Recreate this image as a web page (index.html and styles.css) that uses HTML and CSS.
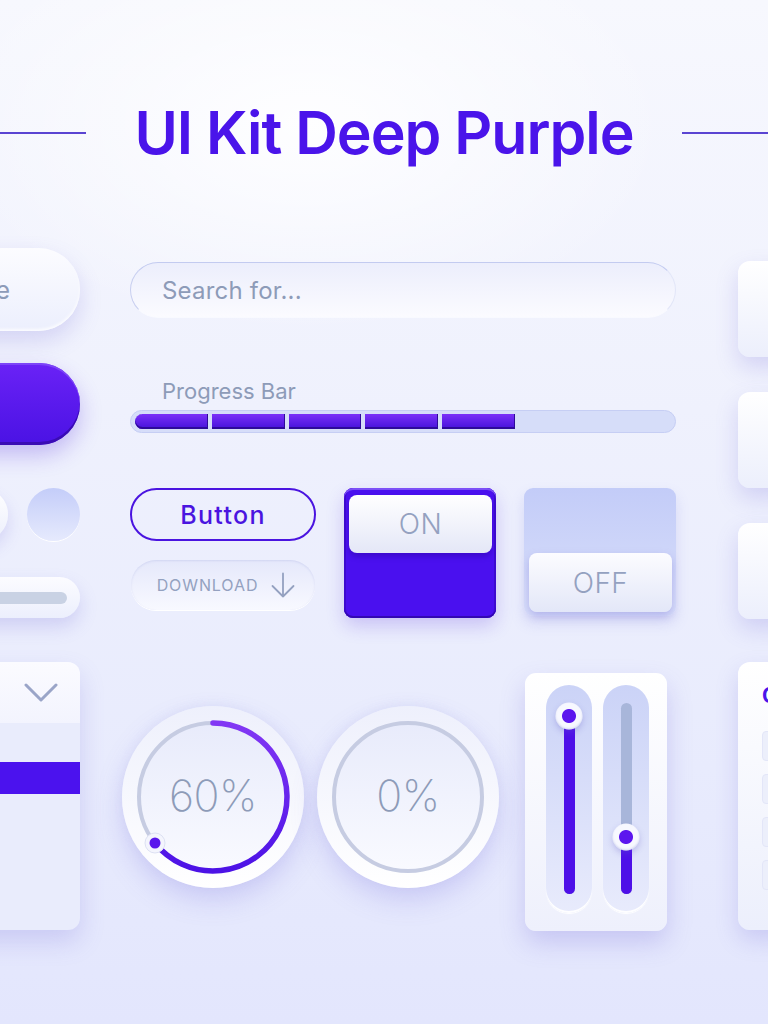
FILE: index.html
```html
<!DOCTYPE html>
<html lang="en">
<head>
<meta charset="utf-8">
<title>UI Kit Deep Purple</title>
<link rel="stylesheet" href="styles.css">
</head>
<body>
<main class="page">
  <header class="title-row">
    <span class="title-line"></span>
    <h1 class="title">UI Kit Deep Purple</h1>
    <span class="title-line"></span>
  </header>

  <section class="board">
    <div class="col col-left">
      <div class="pill-light"><span>Inactive</span></div>
      <div class="pill-purple"></div>
      <div class="dot-row">
        <span class="dot dot-white"></span>
        <span class="dot dot-blue"></span>
      </div>
      <div class="range-pill"><span class="range-track"></span></div>
      <div class="dropdown">
        <div class="dropdown-head">
          <svg class="chevron" width="34" height="20" viewBox="0 0 34 20"><polyline points="2,2 17,17 32,2" fill="none" stroke="#9aa5c8" stroke-width="3" stroke-linecap="round" stroke-linejoin="round"/></svg>
        </div>
        <div class="dropdown-body">
          <div class="dropdown-item selected"></div>
        </div>
      </div>
    </div>

    <div class="col col-mid">
      <div class="search"><span>Search for...</span></div>
      <div class="progress-label">Progress Bar</div>
      <div class="progress">
        <span class="seg seg-first"></span>
        <span class="seg"></span>
        <span class="seg"></span>
        <span class="seg"></span>
        <span class="seg"></span>
      </div>

      <div class="controls">
        <div class="btn-col">
          <button class="btn-outline">Button</button>
          <button class="btn-download">
            <span>DOWNLOAD</span>
            <svg width="24" height="26" viewBox="0 0 24 26"><path d="M12 1.5V24.5M1.5 14L12 24.5L22.5 14" fill="none" stroke="#94a1c0" stroke-width="1.8" stroke-linecap="round" stroke-linejoin="round"/></svg>
          </button>
        </div>
        <div class="toggle toggle-on"><div class="toggle-key">ON</div></div>
        <div class="toggle toggle-off"><div class="toggle-key">OFF</div></div>
      </div>

      <div class="bottom-row">
        <div class="gauge gauge-first">
          <svg class="gauge-ring" viewBox="0 0 182 182">
            <defs>
              <linearGradient id="disc1" x1="0" y1="0" x2="0" y2="1"><stop offset="0" stop-color="#e8ebfb"/><stop offset="1" stop-color="#f9faff"/></linearGradient>
              <linearGradient id="arc1" x1="0" y1="0" x2="0" y2="1"><stop offset="0" stop-color="#8237f4"/><stop offset="1" stop-color="#4c12e6"/></linearGradient>
            </defs>
            <circle cx="91" cy="91" r="74" fill="url(#disc1)" stroke="#c6cce2" stroke-width="4"/>
            <path d="M91 17 A74 74 0 1 1 33 137" fill="none" stroke="url(#arc1)" stroke-width="5.5" stroke-linecap="round"/>
            <circle cx="33" cy="137" r="10" fill="#f4f5fd" stroke="#dde1f3" stroke-width="1"/>
            <circle cx="33" cy="137" r="5.5" fill="#5a17ec"/>
          </svg>
          <span class="gauge-value">60%</span>
        </div>
        <div class="gauge gauge-second">
          <svg class="gauge-ring" viewBox="0 0 182 182">
            <defs>
              <linearGradient id="disc2" x1="0" y1="0" x2="0" y2="1"><stop offset="0" stop-color="#e8ebfb"/><stop offset="1" stop-color="#f9faff"/></linearGradient>
            </defs>
            <circle cx="91" cy="91" r="74" fill="url(#disc2)" stroke="#c6cce2" stroke-width="4"/>
          </svg>
          <span class="gauge-value">0%</span>
        </div>
        <div class="slider-card">
          <div class="slider-track">
            <div class="slider-bar">
              <span class="slider-fill" style="height:93%"></span>
              <span class="slider-knob" style="top:7%"></span>
            </div>
          </div>
          <div class="slider-track">
            <div class="slider-bar">
              <span class="slider-fill" style="height:30%"></span>
              <span class="slider-knob" style="top:70%"></span>
            </div>
          </div>
        </div>
      </div>
    </div>

    <div class="col col-right">
      <div class="card card-first"></div>
      <div class="card card-gap"></div>
      <div class="card card-gap"></div>
      <div class="card card-list">
        <div class="card-list-title">Options</div>
        <div class="list-row"></div>
        <div class="list-row"></div>
        <div class="list-row"></div>
        <div class="list-row"></div>
      </div>
    </div>
  </section>
</main>
</body>
</html>
```

FILE: styles.css
```css
* { box-sizing: border-box; }

html, body {
  margin: 0;
  padding: 0;
}

body {
  width: 768px;
  height: 1024px;
  overflow: hidden;
  font-family: Inter, "Open Sans", "Liberation Sans", sans-serif;
  background:
    radial-gradient(ellipse 520px 300px at 40% 12%, rgba(255,255,255,0.9), rgba(255,255,255,0) 70%),
    linear-gradient(180deg, #f7f8fe 0%, #eff1fd 40%, #e8ebfd 75%, #e3e6fd 100%);
}

.page {
  width: 768px;
  height: 1024px;
  overflow: hidden;
}

/* ---------- title ---------- */
.title-row {
  display: flex;
  align-items: center;
  justify-content: space-between;
  padding-top: 102px;
  height: 164px;
}

.title-line {
  width: 86px;
  height: 2px;
  background: #5a44d2;
}

.title {
  margin: 0;
  font-size: 59px;
  line-height: 62px;
  font-weight: 600;
  letter-spacing: -1px;
  color: #4a14ea;
}

/* ---------- board ---------- */
.board {
  display: flex;
  align-items: flex-start;
  margin-top: 84px;
  margin-left: -120px;
  width: 1058px;
}

.col { display: flex; flex-direction: column; }

.col-left { width: 200px; margin-right: 50px; }
.col-mid { width: 546px; }
.col-right { width: 200px; margin-left: 62px; }

/* ---------- left column ---------- */
.pill-light {
  height: 83px;
  border-radius: 42px;
  background: linear-gradient(180deg, #fcfcff 0%, #eceffd 100%);
  box-shadow: 0 10px 22px rgba(110, 100, 215, 0.22), inset 0 -2px 3px rgba(255,255,255,0.8);
  display: flex;
  align-items: center;
  justify-content: flex-end;
  padding-right: 70px;
  font-size: 25px;
  color: #8d9bb8;
}

.pill-purple {
  margin-top: 32px;
  height: 82px;
  border-radius: 41px;
  background: linear-gradient(180deg, #6a22f6 0%, #4a12e4 100%);
  box-shadow: inset 0 -3px 0 #3a0cb4, inset 0 2px 0 #7d44f8, 0 10px 22px rgba(80, 40, 220, 0.28);
}

.dot-row {
  margin-top: 43px;
  display: flex;
  justify-content: flex-end;
  gap: 19px;
  height: 53px;
}

.dot {
  width: 53px;
  height: 53px;
  border-radius: 50%;
}

.dot-white {
  background: linear-gradient(180deg, #ffffff, #eceffc);
  box-shadow: 0 8px 16px rgba(110, 100, 215, 0.2);
}

.dot-blue {
  background: linear-gradient(180deg, #c4cdf9 0%, #e6eafd 100%);
  box-shadow: 0 1px 0 #ffffff;
}

.range-pill {
  margin-top: 36px;
  height: 41px;
  border-radius: 21px;
  background: linear-gradient(180deg, #fcfcff, #eceffd);
  box-shadow: 0 9px 18px rgba(110, 100, 215, 0.22);
  display: flex;
  align-items: center;
  padding: 0 13px 0 20px;
}

.range-track {
  flex: 1;
  height: 12px;
  border-radius: 6px;
  background: #c9d2e4;
}

.dropdown {
  margin-top: 44px;
  height: 268px;
  border-radius: 12px;
  background: #e9ecfc;
  box-shadow: 0 12px 24px rgba(110, 100, 215, 0.22);
  overflow: hidden;
}

.dropdown-head {
  height: 61px;
  background: linear-gradient(180deg, #fbfbff, #f3f4fe);
  display: flex;
  align-items: center;
  justify-content: flex-end;
  padding-right: 22px;
}

.dropdown-body { padding-top: 39px; }

.dropdown-item { height: 32px; }
.dropdown-item.selected { background: #4b12ee; }

/* ---------- middle column ---------- */
.search {
  margin-top: 14px;
  height: 56px;
  border-radius: 28px;
  background: linear-gradient(180deg, #eceefc 0%, #fbfbff 100%);
  border: 1.5px solid;
  border-color: #c3cbf0 #e2e6f8 #f9faff #c8cff0;
  display: flex;
  align-items: center;
  padding-left: 31px;
  font-size: 24px;
  letter-spacing: 0.2px;
  color: #8d9bb8;
}

.progress-label {
  margin-top: 60px;
  padding-left: 32px;
  font-size: 22px;
  line-height: 26px;
  color: #8d9bb8;
}

.progress {
  margin-top: 6px;
  height: 23px;
  border-radius: 12px;
  background: #d6ddf9;
  border: 1px solid #c6cef4;
  padding: 3px 4px;
  display: flex;
  gap: 4px;
}

.seg {
  flex: 0 0 72.8px;
  height: 15px;
  background: linear-gradient(180deg, #7b30f8 0%, #4512da 100%);
  box-shadow: inset 0 -2px 0 #2e0a9a, inset -1px 0 0 #2e0a9a;
}

.seg-first { border-radius: 8px 0 0 8px; }

.controls {
  margin-top: 55px;
  display: flex;
  justify-content: space-between;
  align-items: flex-start;
  height: 130px;
}

.btn-col {
  width: 186px;
  display: flex;
  flex-direction: column;
  gap: 19px;
}

.btn-outline {
  height: 53px;
  border: 2px solid #4a14e0;
  border-radius: 27px;
  background: transparent;
  font-family: inherit;
  font-size: 25px;
  font-weight: 500;
  letter-spacing: 1.3px;
  color: #4a14e0;
  padding: 0;
}

.btn-download {
  margin-left: 1px;
  width: 184px;
  height: 50px;
  border: none;
  border-radius: 25px;
  background: linear-gradient(180deg, #e5e8fb 0%, #f8f9ff 100%);
  box-shadow: 0 1px 0 #ffffff, inset 0 1px 2px rgba(150, 160, 220, 0.25);
  display: flex;
  align-items: center;
  justify-content: center;
  gap: 13px;
  padding: 0 0 0 6px;
  font-family: inherit;
  font-size: 16px;
  letter-spacing: 0.9px;
  color: #94a1c0;
}

.toggle {
  width: 152px;
  border-radius: 9px;
  display: flex;
  flex-direction: column;
}

.toggle-key {
  border-radius: 8px;
  display: flex;
  align-items: center;
  justify-content: center;
  font-size: 28px;
  font-weight: 300;
  letter-spacing: 0.5px;
  color: #94a1c0;
}

.toggle-on {
  height: 130px;
  background: #4a10ef;
  padding: 7px 4px 0 5px;
  box-shadow: inset 0 2px 0 #7c4ff7, inset 0 -2px 0 #3308b2, inset 2px 0 0 #3d0bd0, inset -2px 0 0 #3d0bd0, 0 8px 18px rgba(80, 40, 220, 0.22);
}

.toggle-on .toggle-key {
  height: 58px;
  background: linear-gradient(180deg, #ffffff 0%, #e4e7f7 100%);
  box-shadow: 0 4px 5px rgba(40, 0, 150, 0.35);
}

.toggle-off {
  height: 128px;
  background: linear-gradient(180deg, #c3ccf8 0%, #d9dffa 100%);
  padding: 0 4px 4px 5px;
  justify-content: flex-end;
  box-shadow: 0 7px 14px rgba(120, 120, 220, 0.2);
}

.toggle-off .toggle-key {
  height: 59px;
  background: linear-gradient(180deg, #fcfcff 0%, #e3e7f8 100%);
  box-shadow: 0 4px 8px rgba(110, 100, 210, 0.35);
}

.bottom-row {
  margin-top: 55px;
  display: flex;
  align-items: flex-start;
}

.gauge {
  position: relative;
  width: 182px;
  height: 182px;
  margin-top: 33px;
  border-radius: 50%;
  background: linear-gradient(180deg, #eef0fc 0%, #ffffff 100%);
  box-shadow: 0 12px 26px rgba(120, 110, 225, 0.25), 0 -2px 8px rgba(220, 224, 248, 0.6);
  display: flex;
  align-items: center;
  justify-content: center;
}

.gauge-first { margin-left: -8px; }
.gauge-second { margin-left: 13px; }

.gauge-ring {
  position: absolute;
  inset: 0;
  width: 182px;
  height: 182px;
}

.gauge-value {
  position: relative;
  top: -2px;
  font-size: 43px;
  font-weight: 200;
  letter-spacing: -0.5px;
  color: #8d9bb8;
}

.slider-card {
  margin-left: 26px;
  width: 142px;
  height: 258px;
  border-radius: 11px;
  background: linear-gradient(180deg, #ffffff 0%, #eef0fc 100%);
  box-shadow: 0 12px 24px rgba(110, 100, 215, 0.25);
  display: flex;
  gap: 11px;
  padding: 12px 0 0 21px;
}

.slider-track {
  width: 46px;
  height: 228px;
  border-radius: 23px;
  background: linear-gradient(180deg, #cbd3f7 0%, #e8ebfc 100%);
  box-shadow: inset 0 -2px 0 rgba(255, 255, 255, 0.95), 0 1px 1px #ffffff;
  display: flex;
  justify-content: center;
  padding: 18px 0 19px;
}

.slider-bar {
  position: relative;
  width: 11px;
  height: 191px;
  border-radius: 6px;
  background: #a8b6da;
  display: flex;
  flex-direction: column;
  justify-content: flex-end;
}

.slider-fill {
  display: block;
  width: 11px;
  border-radius: 6px;
  background: #4e10e8;
}

.slider-knob {
  position: absolute;
  left: 50%;
  width: 27px;
  height: 27px;
  border-radius: 50%;
  transform: translate(-50%, -50%);
  background: radial-gradient(circle, #5c16ee 0 6.5px, #f7f8ff 7.5px);
  box-shadow: 0 3px 6px rgba(100, 90, 200, 0.3), inset 0 -1px 2px rgba(190, 196, 230, 0.6);
}

/* ---------- right column ---------- */
.card {
  height: 96px;
  border-radius: 12px;
  background: linear-gradient(180deg, #ffffff 0%, #eceffc 100%);
  box-shadow: 0 10px 22px rgba(110, 100, 215, 0.22);
}

.card-first { margin-top: 13px; }
.card-gap { margin-top: 35px; }

.card-list {
  margin-top: 43px;
  height: 268px;
  padding: 20px 0 0 24px;
  display: flex;
  flex-direction: column;
  gap: 13px;
}

.card-list-title {
  font-size: 21px;
  font-weight: 700;
  color: #4a14ea;
  line-height: 28px;
  margin-bottom: 8px;
}

.list-row {
  height: 30px;
  border-radius: 4px;
  background: #eceffb;
  border: 1px solid #e3e6f8;
}
```
